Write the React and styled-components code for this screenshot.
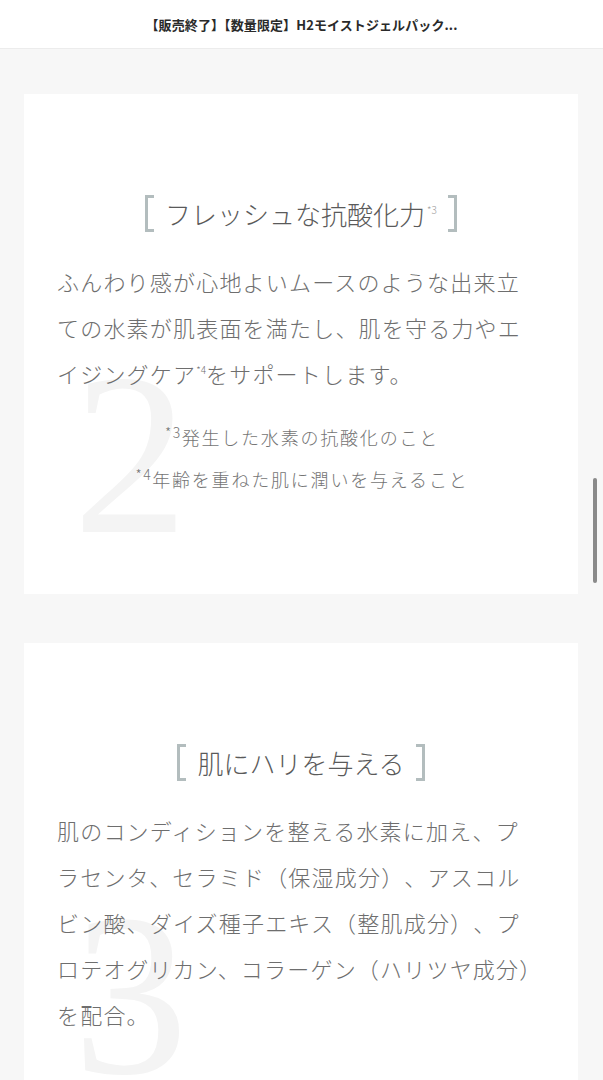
import React from "react";
import styled, { createGlobalStyle } from "styled-components";

const GlobalStyle = createGlobalStyle`
  html, body {
    margin: 0;
    padding: 0;
    background: #f7f7f7;
    font-family: "Noto Sans CJK JP", "Noto Sans", sans-serif;
    text-spacing-trim: space-all;
  }
  * { box-sizing: border-box; }
`;

const Header = styled.header`
  height: 49px;
  background: #ffffff;
  border-bottom: 1px solid #ececec;
  display: flex;
  align-items: center;
  justify-content: center;
`;

const HeaderTitle = styled.h1`
  margin: 0;
  font-size: 13px;
  font-weight: 700;
  color: #2a2a2a;
  letter-spacing: 0.1px;
  white-space: nowrap;
  text-spacing-trim: normal;
`;

const Main = styled.main`
  display: flex;
  flex-direction: column;
  gap: 49px;
  padding: 45px 25px 0 24px;
`;

const Card = styled.section`
  position: relative;
  overflow: hidden;
  background: #ffffff;
  padding: 99px 28px ${(p) => p.$bottom}px 33px;
`;

const BigNumber = styled.span`
  position: absolute;
  left: 49px;
  top: ${(p) => p.$top}px;
  font-family: "Liberation Serif", "DejaVu Serif", serif;
  font-size: 230px;
  line-height: 1;
  color: #f4f4f4;
  pointer-events: none;
  user-select: none;
`;

const Content = styled.div`
  position: relative;
  z-index: 1;
`;

const TitleRow = styled.h2`
  margin: 0 0 0 -5px;
  height: 40px;
  display: flex;
  align-items: center;
  justify-content: center;
  gap: 11px;
`;

const Bracket = styled.span`
  display: block;
  width: 9px;
  height: 37px;
  border: 3px solid #b3bdbe;
  ${(p) => (p.$side === "left" ? "border-right: none;" : "border-left: none;")}
`;

const TitleText = styled.span`
  font-size: 26px;
  font-weight: 300;
  color: #5a5a5a;
  letter-spacing: 0;
  white-space: nowrap;
`;

const TitleSup = styled.sup`
  font-size: 10px;
  color: #9a9a9a;
  vertical-align: 11px;
  margin-left: 2px;
`;

const Body = styled.p`
  margin: 25px 0 0;
  font-size: 22px;
  font-weight: 300;
  line-height: 46px;
  letter-spacing: 1.2px;
  color: #6e6e6e;
  white-space: nowrap;
`;

const BodySup = styled.sup`
  font-size: 10px;
  vertical-align: 9px;
  line-height: 0;
  letter-spacing: 0;
`;

const Notes = styled.div`
  margin: 20px 0 0 -5px;
  display: flex;
  flex-direction: column;
  align-items: center;
`;

const Note = styled.p`
  margin: 0;
  font-size: 18px;
  font-weight: 300;
  line-height: 42px;
  letter-spacing: 1.8px;
  color: #747474;
  white-space: nowrap;
`;

const NoteSup = styled.sup`
  font-size: 14px;
  vertical-align: 7px;
  line-height: 0;
  letter-spacing: 1.5px;
  margin-left: 2px;
`;

const ScrollThumb = styled.div`
  position: fixed;
  right: 6px;
  top: 478px;
  width: 4px;
  height: 105px;
  border-radius: 2px;
  background: #8a8a8a;
`;

function Title({ children, sup }) {
  return (
    <TitleRow>
      <Bracket $side="left" />
      <TitleText>
        {children}
        {sup && <TitleSup>{sup}</TitleSup>}
      </TitleText>
      <Bracket $side="right" />
    </TitleRow>
  );
}

export default function App() {
  return (
    <>
      <GlobalStyle />
      <Header>
        <HeaderTitle>【販売終了】【数量限定】H2モイストジェルパック...</HeaderTitle>
      </Header>
      <Main>
        <Card $bottom={94}>
          <BigNumber $top={246} aria-hidden="true">2</BigNumber>
          <Content>
            <Title sup="*3">フレッシュな抗酸化力</Title>
            <Body>
              ふんわり感が心地よいムースのような出来立
              <br />
              ての水素が肌表面を満たし、肌を守る力やエ
              <br />
              イジングケア<BodySup>*4</BodySup>をサポートします。
            </Body>
            <Notes>
              <Note>
                <NoteSup>*3</NoteSup>発生した水素の抗酸化のこと
              </Note>
              <Note>
                <NoteSup>*4</NoteSup>年齢を重ねた肌に潤いを与えること
              </Note>
            </Notes>
          </Content>
        </Card>
        <Card $bottom={94}>
          <BigNumber $top={238} aria-hidden="true">3</BigNumber>
          <Content>
            <Title>肌にハリを与える</Title>
            <Body>
              肌のコンディションを整える水素に加え、プ
              <br />
              ラセンタ、セラミド（保湿成分）、アスコル
              <br />
              ビン酸、ダイズ種子エキス（整肌成分）、プ
              <br />
              ロテオグリカン、コラーゲン（ハリツヤ成分）
              <br />
              を配合。
            </Body>
          </Content>
        </Card>
      </Main>
      <ScrollThumb />
    </>
  );
}
